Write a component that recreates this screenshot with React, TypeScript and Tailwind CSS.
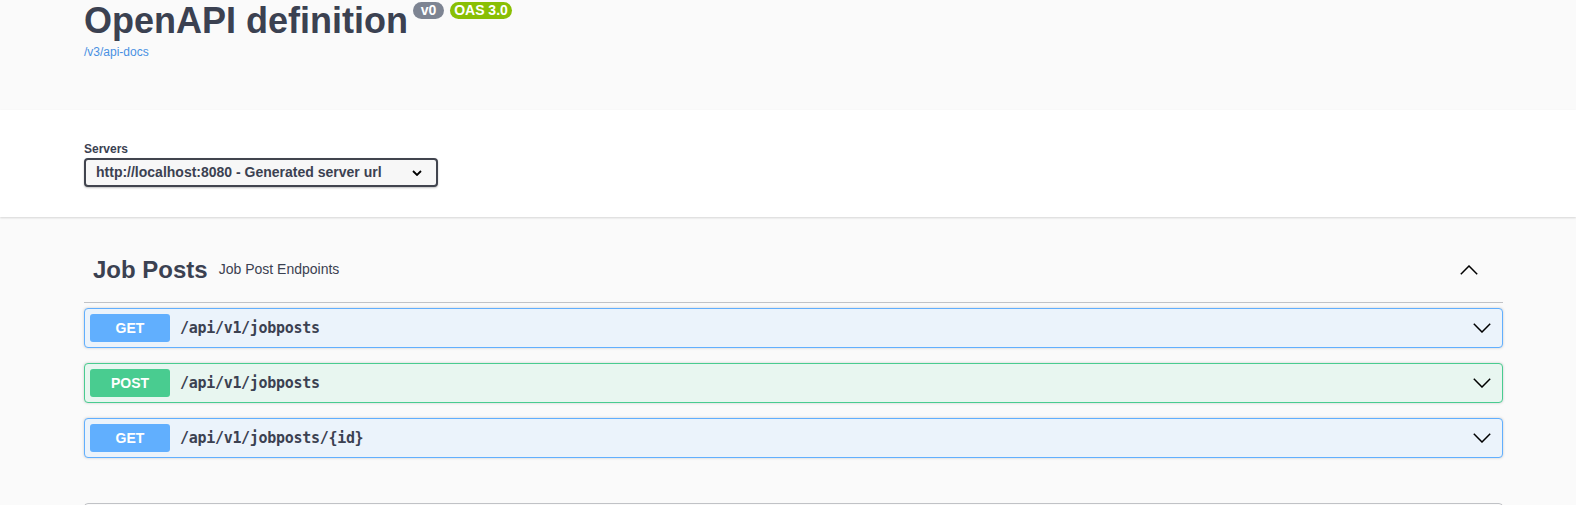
const ops = [
  { method: "GET", path: "/api/v1/jobposts" },
  { method: "POST", path: "/api/v1/jobposts" },
  { method: "GET", path: "/api/v1/jobposts/{id}" },
];

function Chevron({ up = false }: { up?: boolean }) {
  return (
    <svg width="18" height="10" viewBox="0 0 18 10" fill="none" className="shrink-0">
      <polyline
        points={up ? "0.8,9.2 9,1 17.2,9.2" : "0.8,0.8 9,9 17.2,0.8"}
        stroke="#000"
        strokeWidth="1.5"
      />
    </svg>
  );
}

function OpBlock({ method, path }: { method: string; path: string }) {
  const isGet = method === "GET";
  return (
    <div
      className={`mb-[15px] flex h-[40px] items-center rounded-[4px] border p-[5px] shadow-[0_0_3px_rgba(0,0,0,0.19)] ${
        isGet ? "border-[#61affe] bg-[#ebf3fb]" : "border-[#49cc90] bg-[#e8f6f0]"
      }`}
    >
      <span
        className={`flex h-[28px] w-[80px] items-center justify-center rounded-[3px] text-[14px] font-bold text-white ${
          isGet ? "bg-[#61affe]" : "bg-[#49cc90]"
        }`}
      >
        {method}
      </span>
      <span className="flex-1 px-[10px] font-['DejaVu_Sans_Mono',monospace] text-[15px] font-bold tracking-[-0.3px] text-[#3b4151]">
        {path}
      </span>
      <span className="mr-[6px] flex">
        <Chevron />
      </span>
    </div>
  );
}

export default function App() {
  return (
    <div className="min-h-[505px] bg-[#fafafa] font-['Liberation_Sans',Arial,sans-serif] text-[#3b4151]">
      {/* info */}
      <div className="h-[110px] pl-[84px]">
        <div className="flex items-start pt-[3px]">
          <h2 className="text-[36px] font-bold leading-[36px] text-[#3b4151]">OpenAPI definition</h2>
          <div className="ml-[5px] mt-[-1px] flex gap-[6px]">
            <span className="flex h-[17px] w-[31px] items-center justify-center rounded-full bg-[#7d8492] text-[14px] font-bold text-white">
              v0
            </span>
            <span className="flex h-[17px] w-[62px] items-center justify-center rounded-full bg-[#89bf04] text-[14px] font-bold text-white">
              OAS 3.0
            </span>
          </div>
        </div>
        <a className="mt-[4px] block text-[12px] text-[#4990e2]">/v3/api-docs</a>
      </div>

      {/* servers */}
      <div className="h-[107px] bg-white pl-[84px] pt-[32px] shadow-[0_1px_2px_0_rgba(0,0,0,0.15)]">
        <div className="text-[12px] font-bold leading-[14px] text-[#3b4151]">Servers</div>
        <div className="mt-[2px] flex h-[29px] w-[354px] items-center justify-between rounded-[4px] border-2 border-[#41444e] bg-[#f7f7f7] pl-[10px] pr-[14px] shadow-[0_1px_2px_0_rgba(0,0,0,0.25)]">
          <span className="text-[14px] font-bold text-[#3b4151]">http://localhost:8080 - Generated server url</span>
          <svg width="10" height="6" viewBox="0 0 10 6" fill="none">
            <polyline points="1,1 5,5 9,1" stroke="#000" strokeWidth="1.8" />
          </svg>
        </div>
      </div>

      {/* tag section */}
      <div className="ml-[84px] w-[1419px] pt-[17px]">
        <div className="mb-[5px] flex h-[69px] items-center border-b border-[rgba(59,65,81,0.3)] pl-[9px] pr-[25px] pt-[3px]">
          <span className="text-[24px] font-bold text-[#3b4151]">Job Posts</span>
          <span className="ml-[11px] flex-1 text-[14px] text-[#3b4151]">Job Post Endpoints</span>
          <Chevron up />
        </div>
        {ops.map((op, i) => (
          <OpBlock key={i} method={op.method} path={op.path} />
        ))}
        <div className="mt-[45px] h-[60px] rounded-[4px] border border-[rgba(59,65,81,0.3)]" />
      </div>
    </div>
  );
}
